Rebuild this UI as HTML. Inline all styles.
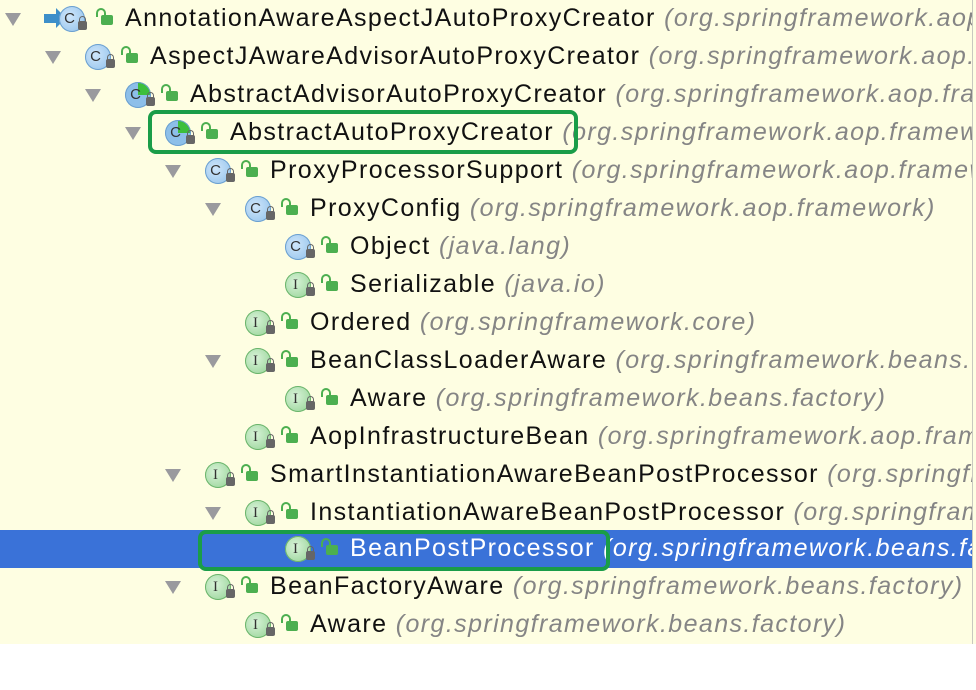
<!DOCTYPE html>
<html><head><meta charset="utf-8"><style>
body{margin:0;width:976px;height:690px;background:#fff;position:relative;overflow:hidden;font-family:"Liberation Sans",sans-serif}
#bg{position:absolute;left:0;top:0;width:976px;height:644px;background:#FEFEE2}
.vl{position:absolute;left:972px;top:0;width:1px;height:644px;background:#c8c8c0}
.row{position:absolute;left:0;width:972px;height:38px;overflow:hidden}
.sel{background:#3A72D8}
.tri{position:absolute;top:13px;width:0;height:0;border-left:8px solid transparent;border-right:8px solid transparent;border-top:13px solid #9a9a9e}
.ic{position:absolute;top:6px;width:26px;height:26px;border-radius:50%;font:15px "Liberation Sans",sans-serif;color:#333;text-align:center;line-height:26px;text-indent:-5px}
.c{background:radial-gradient(circle at 40% 40%,#cfe6fb,#8dbfe9);box-shadow:inset 0 0 0 1px #6a9fcf}
.i{background:radial-gradient(circle at 40% 40%,#d9f3d9,#8fd08f);box-shadow:inset 0 0 0 1px #6ab46a;font-family:"Liberation Serif",serif}
.abs{background:conic-gradient(#3cbf3c 0 25%,#8dbfe9 25% 75%,#3cbf3c 75% 75.1%,#8dbfe9 75.1%)}
.lk{position:absolute;top:21px;width:9px;height:9px;background:#666;border-radius:2px}
.lk:before{content:"";position:absolute;left:1px;top:-5px;width:5px;height:6px;border:1.5px solid #666;border-bottom:none;border-radius:4px 4px 0 0}
.gl{position:absolute;top:15px;width:12px;height:10px;background:#4CAF50;border-radius:2px}
.gl:before{content:"";position:absolute;left:-5px;top:-7px;width:6px;height:7px;border:2px solid #4CAF50;border-bottom:none;border-radius:5px 5px 0 0}
.t{position:absolute;top:4px;font-size:25px;color:#111;white-space:nowrap;letter-spacing:1.4px}
.t i{color:#858585}
.sel .t,.sel .t i{color:#fff}
.box{position:absolute;border:4px solid #1a9d48;border-radius:8px}
</style></head><body>
<div id="bg"></div><div class="vl"></div>

<div class="row" style="top:0px"><div class="tri" style="left:5px"></div><div style="position:absolute;left:44px;top:14px;width:14px;height:9px;background:#3d8fc9"></div><div style="position:absolute;left:56px;top:8px;border-left:10px solid #3d8fc9;border-top:10px solid transparent;border-bottom:10px solid transparent"></div><div class="ic c" style="left:59px">C</div><div class="lk" style="left:78px"></div><div class="gl" style="left:101px"></div><div class="t" style="left:125px">AnnotationAwareAspectJAutoProxyCreator <i>(org.springframework.aop.aspectj.autoproxy)</i></div></div>

<div class="row" style="top:38px"><div class="tri" style="left:45px"></div><div class="ic c" style="left:85px">C</div><div class="lk" style="left:106px"></div><div class="gl" style="left:126px"></div><div class="t" style="left:150px">AspectJAwareAdvisorAutoProxyCreator <i>(org.springframework.aop.aspectj.autoproxy)</i></div></div>

<div class="row" style="top:76px"><div class="tri" style="left:85px"></div><div class="ic c abs" style="left:125px">C</div><div class="lk" style="left:146px"></div><div class="gl" style="left:166px"></div><div class="t" style="left:190px">AbstractAdvisorAutoProxyCreator <i>(org.springframework.aop.framework.autoproxy)</i></div></div>

<div class="row" style="top:114px"><div class="tri" style="left:125px"></div><div class="ic c abs" style="left:165px">C</div><div class="lk" style="left:186px"></div><div class="gl" style="left:206px"></div><div class="t" style="left:230px">AbstractAutoProxyCreator <i>(org.springframework.aop.framework.autoproxy)</i></div></div>

<div class="row" style="top:152px"><div class="tri" style="left:165px"></div><div class="ic c" style="left:205px">C</div><div class="lk" style="left:226px"></div><div class="gl" style="left:246px"></div><div class="t" style="left:270px">ProxyProcessorSupport <i>(org.springframework.aop.framework)</i></div></div>

<div class="row" style="top:190px"><div class="tri" style="left:205px"></div><div class="ic c" style="left:245px">C</div><div class="lk" style="left:266px"></div><div class="gl" style="left:286px"></div><div class="t" style="left:310px">ProxyConfig <i>(org.springframework.aop.framework)</i></div></div>

<div class="row" style="top:228px"><div class="ic c" style="left:285px">C</div><div class="lk" style="left:306px"></div><div class="gl" style="left:326px"></div><div class="t" style="left:350px">Object <i>(java.lang)</i></div></div>

<div class="row" style="top:266px"><div class="ic i" style="left:285px">I</div><div class="lk" style="left:306px"></div><div class="gl" style="left:326px"></div><div class="t" style="left:350px">Serializable <i>(java.io)</i></div></div>

<div class="row" style="top:304px"><div class="ic i" style="left:245px">I</div><div class="lk" style="left:266px"></div><div class="gl" style="left:286px"></div><div class="t" style="left:310px">Ordered <i>(org.springframework.core)</i></div></div>

<div class="row" style="top:342px"><div class="tri" style="left:205px"></div><div class="ic i" style="left:245px">I</div><div class="lk" style="left:266px"></div><div class="gl" style="left:286px"></div><div class="t" style="left:310px">BeanClassLoaderAware <i>(org.springframework.beans.factory)</i></div></div>

<div class="row" style="top:380px"><div class="ic i" style="left:285px">I</div><div class="lk" style="left:306px"></div><div class="gl" style="left:326px"></div><div class="t" style="left:350px">Aware <i>(org.springframework.beans.factory)</i></div></div>

<div class="row" style="top:418px"><div class="ic i" style="left:245px">I</div><div class="lk" style="left:266px"></div><div class="gl" style="left:286px"></div><div class="t" style="left:310px">AopInfrastructureBean <i>(org.springframework.aop.framework)</i></div></div>

<div class="row" style="top:456px"><div class="tri" style="left:165px"></div><div class="ic i" style="left:205px">I</div><div class="lk" style="left:226px"></div><div class="gl" style="left:246px"></div><div class="t" style="left:270px">SmartInstantiationAwareBeanPostProcessor <i>(org.springframework.beans.factory.config)</i></div></div>

<div class="row" style="top:494px"><div class="tri" style="left:205px"></div><div class="ic i" style="left:245px">I</div><div class="lk" style="left:266px"></div><div class="gl" style="left:286px"></div><div class="t" style="left:310px">InstantiationAwareBeanPostProcessor <i>(org.springframework.beans.factory.config)</i></div></div>

<div class="row sel" style="top:530px"><div class="ic i" style="left:285px">I</div><div class="lk" style="left:306px"></div><div class="gl" style="left:326px"></div><div class="t" style="left:350px">BeanPostProcessor <i>(org.springframework.beans.factory.config)</i></div></div>

<div class="row" style="top:568px"><div class="tri" style="left:165px"></div><div class="ic i" style="left:205px">I</div><div class="lk" style="left:226px"></div><div class="gl" style="left:246px"></div><div class="t" style="left:270px">BeanFactoryAware <i>(org.springframework.beans.factory)</i></div></div>

<div class="row" style="top:606px"><div class="ic i" style="left:245px">I</div><div class="lk" style="left:266px"></div><div class="gl" style="left:286px"></div><div class="t" style="left:310px">Aware <i>(org.springframework.beans.factory)</i></div></div>

<div class="box" style="left:148px;top:110px;width:422px;height:36px"></div>
<div class="box" style="left:198px;top:530px;width:404px;height:33px"></div>
</body></html>
